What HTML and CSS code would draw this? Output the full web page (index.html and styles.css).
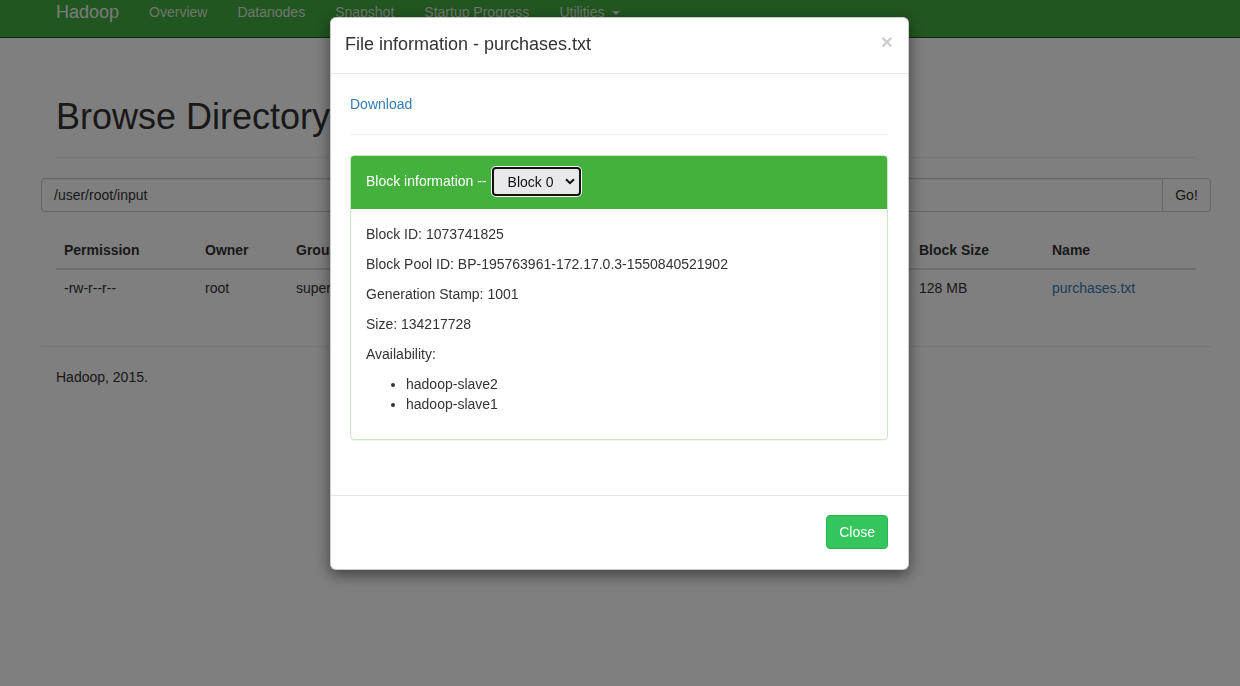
FILE: index.html
```html
<!DOCTYPE html>
<html>
<head>
<meta charset="utf-8">
<title>Browsing HDFS</title>
<link rel="stylesheet" href="styles.css">
</head>
<body>
<header class="navbar">
  <div class="nav-inner">
    <span class="brand">Hadoop</span>
    <span class="nav-link">Overview</span>
    <span class="nav-link">Datanodes</span>
    <span class="nav-link">Snapshot</span>
    <span class="nav-link">Startup Progress</span>
    <span class="nav-link">Utilities <span class="caret"></span></span>
  </div>
</header>

<main class="container">
  <div class="page-header"><h1>Browse Directory</h1></div>
  <div class="input-group">
    <div class="path-input">/user/root/input</div>
    <div class="go-btn">Go!</div>
  </div>
  <table class="listing">
    <colgroup>
      <col class="c-perm"><col class="c-owner"><col class="c-group"><col class="c-size"><col class="c-mod"><col class="c-rep"><col class="c-bsize"><col class="c-name">
    </colgroup>
    <thead>
      <tr><th>Permission</th><th>Owner</th><th>Group</th><th>Size</th><th>Last Modified</th><th>Replication</th><th>Block Size</th><th>Name</th></tr>
    </thead>
    <tbody>
      <tr><td>-rw-r--r--</td><td>root</td><td>supergroup</td><td>128 MB</td><td>Feb 22 13:05</td><td>2</td><td>128 MB</td><td><a class="name-link">purchases.txt</a></td></tr>
    </tbody>
  </table>
  <hr class="foot-rule">
  <footer class="footer">Hadoop, 2015.</footer>
</main>

<div class="backdrop"></div>

<div class="modal">
  <div class="modal-dialog">
    <div class="modal-header">
      <span class="modal-title">File information - purchases.txt</span>
      <span class="close">&times;</span>
    </div>
    <div class="modal-body">
      <a class="download">Download</a>
      <hr class="body-rule">
      <div class="panel">
        <div class="panel-heading">
          <span class="heading-text">Block information --</span>
          <span class="select">Block 0
            <svg class="chev" width="10" height="7" viewBox="0 0 10 7"><path d="M1 1.2 L5 5.2 L9 1.2" fill="none" stroke="#111" stroke-width="2"/></svg>
          </span>
        </div>
        <div class="panel-body">
          <p>Block ID: 1073741825</p>
          <p>Block Pool ID: BP-195763961-172.17.0.3-1550840521902</p>
          <p>Generation Stamp: 1001</p>
          <p>Size: 134217728</p>
          <p>Availability:</p>
          <ul>
            <li>hadoop-slave2</li>
            <li>hadoop-slave1</li>
          </ul>
        </div>
      </div>
    </div>
    <div class="modal-footer">
      <span class="btn-close">Close</span>
    </div>
  </div>
</div>
</body>
</html>
```

FILE: styles.css
```css
* { box-sizing: border-box; }
html, body { margin: 0; padding: 0; }
body {
  font-family: "Liberation Sans", Arial, Helvetica, sans-serif;
  font-size: 14px;
  line-height: 20px;
  color: #333;
  background: #fff;
  width: 1240px;
  height: 686px;
  overflow: hidden;
}

.navbar {
  height: 38px;
  background: #44ac40;
  border-bottom: 1px solid #1e521c;
}
.nav-inner {
  display: flex;
  align-items: center;
  height: 24px;
  padding-left: 56px;
}
.brand {
  font-size: 18px;
  color: #f2f6f2;
  margin-right: 30px;
}
.nav-link {
  color: #dcebda;
  margin-right: 30px;
  font-size: 14px;
}
.caret {
  display: inline-block;
  width: 0;
  height: 0;
  margin-left: 4px;
  vertical-align: middle;
  border-top: 4px solid #dcebda;
  border-left: 4px solid transparent;
  border-right: 4px solid transparent;
}

.container {
  margin-left: 41px;
  width: 1170px;
}
.page-header {
  margin: 0 15px 20px;
  padding-top: 59px;
  padding-bottom: 20px;
  border-bottom: 1px solid #eee;
}
.page-header h1 {
  margin: 0;
  font-size: 36px;
  font-weight: 500;
  line-height: 40px;
}
.input-group {
  display: flex;
  height: 34px;
}
.path-input {
  flex: 1;
  border: 1px solid #ccc;
  border-right: none;
  border-radius: 4px 0 0 4px;
  padding: 6px 12px;
  box-shadow: inset 0 1px 1px rgba(0,0,0,.075);
}
.go-btn {
  width: 49px;
  border: 1px solid #ccc;
  border-radius: 0 4px 4px 0;
  padding: 6px 12px;
  text-align: center;
}
.listing {
  margin: 20px 15px 40px;
  width: 1140px;
  border-collapse: collapse;
  table-layout: fixed;
}
.c-perm { width: 141px; }
.c-owner { width: 91px; }
.c-group { width: 110px; }
.c-size { width: 90px; }
.c-mod { width: 300px; }
.c-rep { width: 123px; }
.c-bsize { width: 133px; }
.c-name { width: 152px; }
.listing th {
  text-align: left;
  padding: 8px;
  font-weight: bold;
  border-bottom: 2px solid #ddd;
  white-space: nowrap;
}
.listing td {
  padding: 8px;
  border-top: 1px solid #ddd;
  white-space: nowrap;
}
.name-link { color: #337ab7; }
.foot-rule {
  margin: 20px 0;
  border: 0;
  border-top: 1px solid #eee;
}
.footer { padding-left: 15px; }

.backdrop {
  position: fixed;
  inset: 0;
  background: rgba(0,0,0,.5);
}
.modal {
  position: fixed;
  inset: 0;
}
.modal-dialog {
  width: 579px;
  margin: 17px 0 0 330px;
  background: #fff;
  border: 1px solid rgba(0,0,0,.2);
  border-radius: 6px;
  box-shadow: 0 5px 15px rgba(0,0,0,.5);
}
.modal-header {
  display: flex;
  justify-content: space-between;
  align-items: flex-start;
  padding: 14px 15px 16px 14px;
  border-bottom: 1px solid #e5e5e5;
}
.modal-title {
  font-size: 18px;
  line-height: 25px;
}
.close {
  font-size: 21px;
  font-weight: bold;
  line-height: 21px;
  color: #000;
  opacity: .2;
  margin-top: -1px;
}
.modal-body {
  padding: 20px 20px 55px 19px;
}
.download {
  display: block;
  color: #337ab7;
}
.body-rule {
  margin: 20px 0;
  border: 0;
  border-top: 1px solid #eee;
}
.panel {
  border: 1px solid #c8e8c1;
  border-radius: 4px;
  box-shadow: 0 1px 1px rgba(0,0,0,.05);
}
.panel-heading {
  display: flex;
  align-items: center;
  gap: 5px;
  height: 53px;
  padding: 0 15px 2px;
  background: #44b13c;
  color: #fff;
  border-radius: 3px 3px 0 0;
}
.heading-text {
  margin-bottom: 2px;
}
.select {
  display: flex;
  align-items: center;
  justify-content: space-between;
  width: 89px;
  height: 29px;
  padding: 0 4px 0 14px;
  background: #e9e9ed;
  color: #111;
  border: 2px solid #111;
  border-radius: 4px;
  box-shadow: 0 0 0 1px #fff;
}
.chev { display: block; }
.panel-body {
  padding: 15px;
}
.panel-body p {
  margin: 0 0 10px;
}
.panel-body ul {
  margin: 0 0 10px;
  padding-left: 40px;
}
.modal-footer {
  display: flex;
  justify-content: flex-end;
  padding: 19px 20px 20px;
  border-top: 1px solid #e5e5e5;
}
.btn-close {
  display: inline-block;
  height: 34px;
  padding: 6px 12px;
  color: #fff;
  background: #34c55c;
  border: 1px solid #2bb54f;
  border-radius: 4px;
}
```
